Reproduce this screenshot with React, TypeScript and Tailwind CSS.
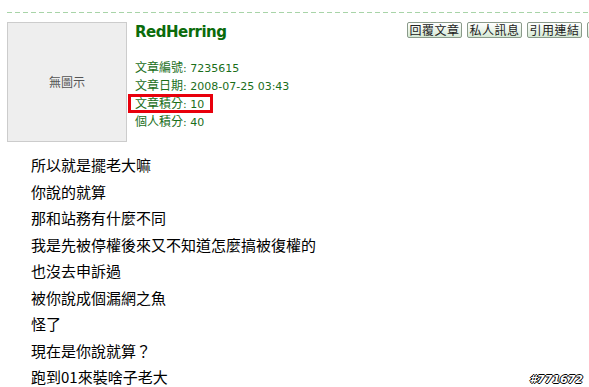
import React from "react";

const lines = [
  "所以就是擺老大嘛",
  "你說的就算",
  "那和站務有什麼不同",
  "我是先被停權後來又不知道怎麼搞被復權的",
  "也沒去申訴過",
  "被你說成個漏網之魚",
  "怪了",
  "現在是你說就算？",
  "跑到01來裝啥子老大",
];

const info: [string, string][] = [
  ["文章編號", "7235615"],
  ["文章日期", "2008-07-25 03:43"],
  ["文章積分", "10"],
  ["個人積分", "40"],
];

const buttons = ["回覆文章", "私人訊息", "引用連結"];

export default function App() {
  return (
    <div className="relative w-[589px] h-[387px] overflow-hidden bg-white font-['DejaVu_Sans','Noto_Sans_CJK_TC',sans-serif]">
      <div className="pt-[12px] pl-[7px]">
        <div className="h-px bg-[repeating-linear-gradient(to_right,#a8d4a8_0_5px,transparent_5px_8px)]" />
      </div>
      <div className="flex pl-[7px] pt-[9px]">
        <div className="w-[120px] h-[120px] shrink-0 border border-[#cccccc] bg-[#eeeeee] flex items-center justify-center text-[12px] text-[#555555] font-['Noto_Sans_CJK_TC',sans-serif]">
          無圖示
        </div>
        <div className="ml-[8px] flex-1 min-w-0">
          <div className="flex">
            <div className="w-[272px] shrink-0 text-[15px] leading-[20px] font-bold text-[#0b6b0b] tracking-[-0.5px]">
              RedHerring
            </div>
            <div className="flex gap-[5px] shrink-0">
              {buttons.map((b) => (
                <div
                  key={b}
                  className="w-[55px] h-[16px] shrink-0 flex items-center justify-center rounded-[2px] border border-[#8a9a8a] bg-[linear-gradient(to_bottom,#ffffff,#d6ead6)] text-[12px] leading-none text-[#222222] tracking-[0.5px] font-['Noto_Sans_CJK_TC',sans-serif]"
                >
                  {b}
                </div>
              ))}
              <div className="w-[55px] h-[16px] shrink-0 rounded-[2px] border border-[#8a9a8a] bg-[linear-gradient(to_bottom,#ffffff,#d6ead6)]" />
            </div>
          </div>
          <div className="mt-[16px] text-[#1a6e1a]">
            {info.map(([k, v], i) => (
              <div key={k} className="relative h-[18px] leading-[18px] whitespace-nowrap">
                <span className="text-[12px] font-['Noto_Sans_CJK_TC',sans-serif]">{k}</span>
                <span className="text-[11px]">: {v}</span>
                {i === 2 && (
                  <span className="absolute left-[-7px] top-0 w-[85px] h-[19px] border-[3px] border-[#e8000c]" />
                )}
              </div>
            ))}
          </div>
        </div>
      </div>
      <div className="pl-[31px] pt-[10px] text-[15px] leading-[26.5px] text-black font-['Noto_Sans_CJK_TC',sans-serif]">
        {lines.map((l) => (
          <div key={l} className="whitespace-nowrap">{l}</div>
        ))}
      </div>
      <div className="absolute right-[6px] bottom-[1px] text-[11px] leading-[13px] font-bold italic text-white [text-shadow:1px_0_#000,-1px_0_#000,0_1px_#000,0_-1px_#000]">
        #771672
      </div>
    </div>
  );
}
